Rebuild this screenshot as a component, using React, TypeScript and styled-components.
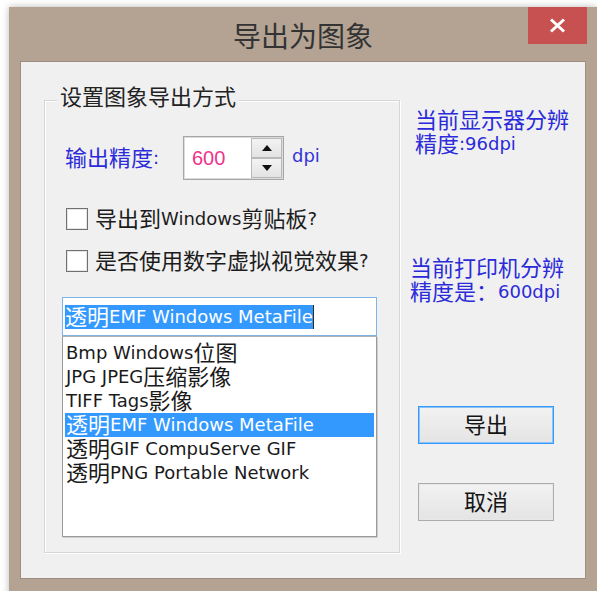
import React from "react";
import styled, { createGlobalStyle } from "styled-components";

const Global = createGlobalStyle`
  html, body { margin: 0; padding: 0; background: #ffffff; overflow: hidden; }
  body {
    width: 597px; height: 591px;
    font-family: "DejaVu Sans", "Noto Sans CJK SC", sans-serif;
    font-size: 18px;
  }
`;

const Page = styled.div`
  box-sizing: border-box;
  height: 591px;
  padding: 7px 0 0 9px;
`;

const Window = styled.div`
  width: 588px;
  height: 600px;
  background: #b4a393;
  box-shadow: 0 0 7px rgba(0, 0, 0, 0.28);
  display: flex;
  flex-direction: column;
`;

const TitleBar = styled.div`
  height: 55px;
  flex: none;
  display: grid;
  grid-template-columns: 1fr auto 1fr;
`;

const Title = styled.div`
  grid-column: 2;
  align-self: center;
  margin-top: 0;
  font-family: "Noto Sans CJK SC", sans-serif;
  font-size: 28px;
  line-height: 32px;
  color: #333333;
`;

const CloseButton = styled.div`
  grid-column: 3;
  justify-self: end;
  align-self: start;
  width: 59px;
  height: 37px;
  margin-right: 10px;
  background: #c75050;
  display: flex;
  align-items: center;
  justify-content: center;
`;

const Client = styled.div`
  margin: 0 12px;
  height: 516px;
  flex: none;
  background: #f0f0f0;
  box-shadow: 0 0 0 1px rgba(120, 100, 85, 0.35);
  display: flex;
  align-items: flex-start;
`;

const Group = styled.div`
  box-sizing: border-box;
  margin: 38px 0 0 23px;
  width: 356px;
  height: 453px;
  border: 1px solid #d6d6d6;
  box-shadow: inset 1px 1px 0 #ffffff, 1px 1px 0 #ffffff;
  display: flex;
  flex-direction: column;
  align-items: flex-start;
`;

const GroupTitle = styled.div`
  margin: -16px 0 0 12px;
  padding: 0 3px;
  height: 24px;
  line-height: 24px;
  background: #f0f0f0;
  color: #222222;
`;

const Han = styled.span<{ $size?: number }>`
  display: inline-block;
  vertical-align: top;
  font-family: "Noto Sans CJK SC", sans-serif;
  font-size: ${(p) => p.$size ?? 22}px;
  line-height: 21px;
`;

const SpinRow = styled.div`
  display: flex;
  align-items: center;
  height: 44px;
  margin: 27px 0 0 20px;
`;

const FieldLabel = styled.div`
  width: 118px;
  line-height: 24px;
  color: #2b2bd9;
`;

const Spin = styled.div`
  box-sizing: border-box;
  width: 101px;
  height: 44px;
  padding: 1px;
  border: 1px solid #a6a6a6;
  box-shadow: inset 0 0 0 1px #dcdcdc;
  background: #ffffff;
  display: flex;
`;

const SpinValue = styled.div`
  flex: 1;
  padding-left: 7px;
  line-height: 40px;
  font-family: "Liberation Sans", sans-serif;
  font-size: 20px;
  color: #f0338c;
`;

const SpinButtons = styled.div`
  width: 31px;
  display: flex;
  flex-direction: column;
`;

const SpinButton = styled.div`
  flex: 1;
  border: 1px solid #b9b9b9;
  background: linear-gradient(#f3f3f3, #e3e3e3);
  display: flex;
  align-items: center;
  justify-content: center;
`;

const Unit = styled.div`
  margin-left: 8px;
  margin-top: -4px;
  color: #3434d6;
  line-height: 24px;
`;

const CheckRow = styled.label<{ $top: number }>`
  display: flex;
  align-items: center;
  gap: 7px;
  height: 24px;
  margin: ${(p) => p.$top}px 0 0 21px;
  color: #1c1c1c;
  line-height: 24px;
`;

const CheckBox = styled.span`
  box-sizing: border-box;
  width: 22px;
  height: 22px;
  border: 1px solid #707070;
  box-shadow: inset 0 0 0 1px #e6e6e6;
  background: #ffffff;
`;

const Combo = styled.div`
  box-sizing: border-box;
  width: 315px;
  height: 39px;
  margin: 24px 0 0 17px;
  padding: 0 2px;
  border: 1px solid #7eb4ea;
  background: #ffffff;
  display: flex;
  align-items: center;
`;

const Selection = styled.span`
  line-height: 24px;
  height: 24px;
  background: #3399ff;
  color: #ffffff;
  border-right: 1px solid #3a2a10;
`;

const List = styled.div`
  box-sizing: border-box;
  width: 315px;
  height: 201px;
  margin-left: 17px;
  padding: 4px 2px;
  border: 1px solid #9a9a9a;
  border-top-color: #b0b0b0;
  box-shadow: 1px 1px 0 #cfcfcf;
  background: #ffffff;
`;

const ListItem = styled.div<{ $selected?: boolean }>`
  height: 24px;
  line-height: 24px;
  padding-left: 1px;
  white-space: nowrap;
  background: ${(p) => (p.$selected ? "#3399ff" : "transparent")};
  color: ${(p) => (p.$selected ? "#ffffff" : "#1a1a1a")};
`;

const Side = styled.div`
  display: flex;
  flex-direction: column;
  align-items: flex-start;
`;

const Info = styled.div<{ $top: number; $left: number }>`
  margin: ${(p) => p.$top}px 0 0 ${(p) => p.$left}px;
  color: #2b2bd9;
  line-height: 24px;
  white-space: nowrap;
`;

const Button = styled.button<{ $top: number; $default?: boolean }>`
  box-sizing: border-box;
  width: 136px;
  height: 38px;
  margin: ${(p) => p.$top}px 0 0 18px;
  padding: 0;
  border: 1px solid ${(p) => (p.$default ? "#3399ff" : "#acacac")};
  box-shadow: ${(p) => (p.$default ? "inset 0 0 0 1px #8cc4f8" : "inset 0 0 0 1px #e8e8e8")};
  background: linear-gradient(#f2f2f2, #e4e4e4);
  font-family: "DejaVu Sans", "Noto Sans CJK SC", sans-serif;
  font-size: 18px;
  line-height: 24px;
  color: #141414;
`;

const HAN_RE = /([\u3000-\u303f\u3400-\u9fff\uff00-\uffef]+)/;

function Mixed({ text, size }: { text: string; size?: number }) {
  const parts = text.split(HAN_RE).filter((s) => s.length > 0);
  return (
    <>
      {parts.map((part, i) =>
        HAN_RE.test(part) ? (
          <Han key={i} $size={size}>
            {part}
          </Han>
        ) : (
          <React.Fragment key={i}>{part}</React.Fragment>
        )
      )}
    </>
  );
}

const formats = [
  "Bmp Windows位图",
  "JPG JPEG压缩影像",
  "TIFF Tags影像",
  "透明EMF Windows MetaFile",
  "透明GIF CompuServe GIF",
  "透明PNG Portable Network",
];

const Arrow = ({ up }: { up?: boolean }) => (
  <svg width="10" height="6" viewBox="0 0 10 6">
    <polygon points={up ? "5,0 10,6 0,6" : "0,0 10,0 5,6"} fill="#111" />
  </svg>
);

export default function App() {
  return (
    <>
      <Global />
      <Page>
        <Window>
          <TitleBar>
            <Title>导出为图象</Title>
            <CloseButton>
              <svg width="17" height="15" viewBox="0 0 17 15">
                <path d="M2 1.5 L15 13.5 M15 1.5 L2 13.5" stroke="#ffffff" strokeWidth="3" />
              </svg>
            </CloseButton>
          </TitleBar>
          <Client>
            <Group>
              <GroupTitle>
                <Mixed text="设置图象导出方式" />
              </GroupTitle>
              <SpinRow>
                <FieldLabel>
                  <Mixed text="输出精度" />:
                </FieldLabel>
                <Spin>
                  <SpinValue>600</SpinValue>
                  <SpinButtons>
                    <SpinButton>
                      <Arrow up />
                    </SpinButton>
                    <SpinButton>
                      <Arrow />
                    </SpinButton>
                  </SpinButtons>
                </Spin>
                <Unit>dpi</Unit>
              </SpinRow>
              <CheckRow $top={27}>
                <CheckBox />
                <span>
                  <Mixed text="导出到Windows剪贴板?" />
                </span>
              </CheckRow>
              <CheckRow $top={18}>
                <CheckBox />
                <span>
                  <Mixed text="是否使用数字虚拟视觉效果?" />
                </span>
              </CheckRow>
              <Combo>
                <Selection>
                  <Mixed text="透明EMF Windows MetaFile" />
                </Selection>
              </Combo>
              <List>
                {formats.map((f, i) => (
                  <ListItem key={f} $selected={i === 3}>
                    <Mixed text={f} />
                  </ListItem>
                ))}
              </List>
            </Group>
            <Side>
              <Info $top={46} $left={15}>
                <Mixed text="当前显示器分辨" />
                <br />
                <Mixed text="精度" />:96dpi
              </Info>
              <Info $top={100} $left={10}>
                <Mixed text="当前打印机分辨" />
                <br />
                <Mixed text="精度是：" />
                600dpi
              </Info>
              <Button $top={102} $default>
                <Mixed text="导出" />
              </Button>
              <Button $top={39}>
                <Mixed text="取消" />
              </Button>
            </Side>
          </Client>
        </Window>
      </Page>
    </>
  );
}
